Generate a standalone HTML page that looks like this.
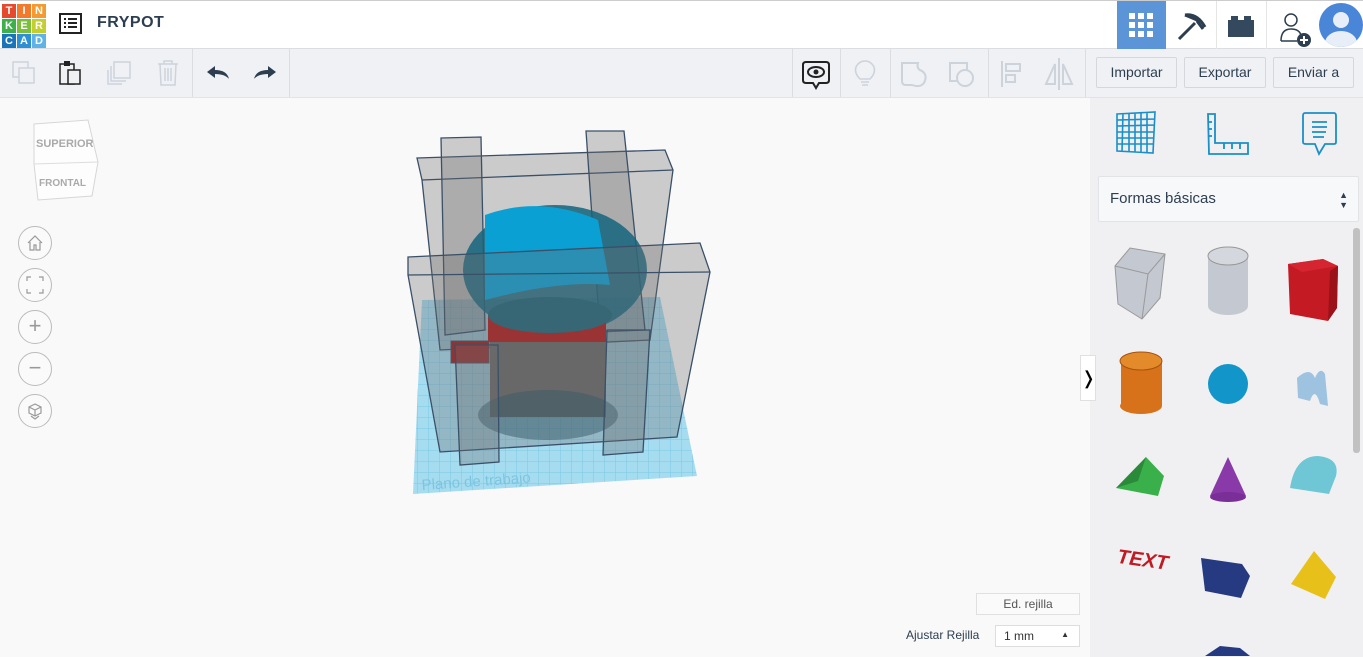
<!DOCTYPE html>
<html><head><meta charset="utf-8">
<style>
*{margin:0;padding:0;box-sizing:border-box}
html,body{width:1363px;height:657px;overflow:hidden}
body{background:#f9f9f9;font-family:"Liberation Sans",sans-serif;position:relative}
.top{position:absolute;left:0;top:0;width:1363px;height:49px;background:#fff;border-top:1px solid #ccc;border-bottom:1px solid #dcdde0}
.tb{position:absolute;left:0;top:49px;width:1363px;height:49px;background:#f0f1f4;border-bottom:1px solid #e2e3e6}
.logo{position:absolute;left:2px;top:3px;display:grid;grid-template-columns:repeat(3,14px);grid-template-rows:repeat(3,14px);gap:1px}
.logo div{color:#fff;font-weight:bold;font-size:11px;text-align:center;line-height:14px}
.btn{position:absolute;top:8px;height:31px;border:1px solid #d5d7dc;border-radius:2px;background:#f0f1f4;font-size:14px;color:#2c3e50;text-align:center;line-height:29px}
.sep{position:absolute;top:0;width:1px;height:48px;background:#dcdde0}
.rp{position:absolute;left:1090px;top:98px;width:273px;height:559px;background:#f0f0f3;overflow:hidden}
.circ{position:absolute;left:18px;width:34px;height:34px;border:1px solid #bbb;border-radius:50%;background:#fafafa;color:#999;text-align:center;font-size:22px;line-height:30px}
</style></head><body>
<div class="top">
<div class="logo">
<div style="background:#e64a2e">T</div><div style="background:#f27a2a">I</div><div style="background:#f39b30">N</div>
<div style="background:#3db04a">K</div><div style="background:#7cbf3a">E</div><div style="background:#c3cf2b">R</div>
<div style="background:#1a74b8">C</div><div style="background:#2e8fd3">A</div><div style="background:#5fb3e6">D</div>
</div>
<svg style="position:absolute;left:59px;top:12px" width="23" height="21" viewBox="0 0 23 21"><rect x="1" y="1" width="21" height="19" fill="none" stroke="#222" stroke-width="2"/><rect x="5" y="5" width="2" height="2" fill="#222"/><rect x="9" y="5" width="9" height="2" fill="#222"/><rect x="5" y="9" width="2" height="2" fill="#222"/><rect x="9" y="9" width="9" height="2" fill="#222"/><rect x="5" y="13" width="2" height="2" fill="#222"/><rect x="9" y="13" width="9" height="2" fill="#222"/></svg>
<div style="position:absolute;left:97px;top:13px;font-size:16px;font-weight:bold;color:#2c3e50;letter-spacing:.5px">FRYPOT</div>
<div style="position:absolute;left:1117px;top:0;width:49px;height:48px;background:#5b95d8"></div>
<svg style="position:absolute;left:1129px;top:12px" width="24" height="24"><g fill="#fff"><rect x="0" y="0" width="6" height="6"/><rect x="9" y="0" width="6" height="6"/><rect x="18" y="0" width="6" height="6"/><rect x="0" y="9" width="6" height="6"/><rect x="9" y="9" width="6" height="6"/><rect x="18" y="9" width="6" height="6"/><rect x="0" y="18" width="6" height="6"/><rect x="9" y="18" width="6" height="6"/><rect x="18" y="18" width="6" height="6"/></g></svg>
<div style="position:absolute;left:1216px;top:0;width:1px;height:48px;background:#e5e5e5"></div>
<div style="position:absolute;left:1266px;top:0;width:1px;height:48px;background:#e5e5e5"></div>
<svg style="position:absolute;left:1175px;top:10px" width="32" height="30"><path d="M4 28 L20 12 M10 4 Q22 2 30 16 M10 4 Q20 8 24 10 M22 10 L28 18" stroke="#2c3e50" stroke-width="3" fill="none"/></svg>
<svg style="position:absolute;left:1228px;top:14px" width="26" height="22"><rect x="0" y="5" width="26" height="17" fill="#34495e"/><rect x="3" y="1" width="7" height="5" fill="#34495e"/><rect x="16" y="1" width="7" height="5" fill="#34495e"/></svg>
<svg style="position:absolute;left:1279px;top:10px" width="34" height="36"><circle cx="12" cy="9" r="6" fill="none" stroke="#2c3e50" stroke-width="1.5"/><path d="M2 30 Q2 18 12 18 Q20 18 22 24 M2 30 H18" fill="none" stroke="#2c3e50" stroke-width="1.5"/><circle cx="25" cy="29" r="7" fill="#2c3e50"/><path d="M25 25 V33 M21 29 H29" stroke="#fff" stroke-width="2"/></svg>
<div style="position:absolute;left:1319px;top:2px;width:44px;height:44px;border-radius:50%;background:#4a86d8;overflow:hidden"><div style="position:absolute;left:14px;top:9px;width:16px;height:16px;border-radius:50%;background:#e8eef8"></div><div style="position:absolute;left:6px;top:28px;width:32px;height:24px;border-radius:50%;background:#e8eef8"></div></div>
</div>
<div class="tb">
<svg style="position:absolute;left:12px;top:12px" width="24" height="24"><rect x="1" y="1" width="15" height="15" fill="none" stroke="#cdd3db" stroke-width="1.5"/><rect x="7" y="7" width="15" height="15" fill="#f0f1f4" stroke="#cdd3db" stroke-width="1.5"/></svg>
<svg style="position:absolute;left:59px;top:10px" width="24" height="28"><rect x="1" y="5" width="14" height="20" fill="none" stroke="#222" stroke-width="1.5"/><rect x="5" y="2" width="6" height="5" fill="#222"/><rect x="9" y="11" width="12" height="14" fill="#f0f1f4" stroke="#222" stroke-width="1.5"/></svg>
<svg style="position:absolute;left:106px;top:11px" width="28" height="28"><rect x="8" y="2" width="16" height="16" fill="none" stroke="#cdd3db" stroke-width="1.5"/><path d="M5 6 V21 H20 M2 10 V24 H16" fill="none" stroke="#cdd3db" stroke-width="1.5"/></svg>
<svg style="position:absolute;left:156px;top:10px" width="24" height="28"><path d="M2 5 H22 M8 5 V2 H16 V5 M4 5 L5 26 H19 L20 5 M9 9 V22 M12 9 V22 M15 9 V22" fill="none" stroke="#cdd3db" stroke-width="1.5"/></svg>
<div class="sep" style="left:192px"></div>
<svg style="position:absolute;left:205px;top:16px" width="26" height="16"><path d="M2 7 L10 1 V5 Q22 5 24 14 Q20 9 10 9 V13 Z" fill="#2c3e50"/></svg>
<svg style="position:absolute;left:252px;top:16px" width="26" height="16"><path d="M24 7 L16 1 V5 Q4 5 2 14 Q6 9 16 9 V13 Z" fill="#2c3e50"/></svg>
<div class="sep" style="left:289px"></div>
<div class="sep" style="left:792px"></div>
<svg style="position:absolute;left:802px;top:11px" width="28" height="30"><path d="M4 2 H24 Q27 2 27 5 V20 Q27 23 24 23 H17 L14 28 L11 23 H4 Q1 23 1 20 V5 Q1 2 4 2Z" fill="none" stroke="#222" stroke-width="2"/><ellipse cx="14" cy="12" rx="8" ry="5" fill="none" stroke="#222" stroke-width="2"/><circle cx="14" cy="12" r="2.5" fill="#222"/></svg>
<div class="sep" style="left:840px"></div>
<svg style="position:absolute;left:852px;top:10px" width="26" height="30"><path d="M8 20 Q2 14 4 8 Q7 2 13 2 Q19 2 22 8 Q24 14 18 20 Z M9 23 H17 M10 26 H16" fill="none" stroke="#cdd3db" stroke-width="1.5"/></svg>
<div class="sep" style="left:890px"></div>
<svg style="position:absolute;left:900px;top:12px" width="30" height="28"><path d="M2 2 H18 Q16 8 22 10 Q28 14 24 22 Q20 27 12 24 L6 24 Q2 24 2 20Z" fill="none" stroke="#cdd3db" stroke-width="2"/></svg>
<svg style="position:absolute;left:948px;top:12px" width="30" height="28"><rect x="2" y="2" width="17" height="18" fill="none" stroke="#cdd3db" stroke-width="2"/><circle cx="17" cy="17" r="8" fill="#f0f1f4" stroke="#cdd3db" stroke-width="2"/></svg>
<div class="sep" style="left:988px"></div>
<svg style="position:absolute;left:1000px;top:11px" width="24" height="28"><path d="M2 1 V27" stroke="#cdd3db" stroke-width="2"/><rect x="6" y="4" width="14" height="7" fill="none" stroke="#cdd3db" stroke-width="2"/><rect x="6" y="15" width="9" height="7" fill="none" stroke="#cdd3db" stroke-width="2"/></svg>
<svg style="position:absolute;left:1043px;top:8px" width="32" height="34"><path d="M16 1 V33" stroke="#cdd3db" stroke-width="2"/><path d="M12 7 L3 27 H12Z M20 7 L29 27 H20Z" fill="none" stroke="#cdd3db" stroke-width="2"/></svg>
<div class="sep" style="left:1085px"></div>
<div class="btn" style="left:1096px;width:81px">Importar</div>
<div class="btn" style="left:1184px;width:82px">Exportar</div>
<div class="btn" style="left:1273px;width:81px">Enviar a</div>
</div>

<svg style="position:absolute;left:28px;top:118px" width="75" height="88" viewBox="0 0 75 88">
<path d="M6 6 L60 2 L70 44 L64 78 L10 82 L6 46Z" fill="#fdfdfd" stroke="#d6d6d6"/>
<path d="M6 46 L70 44" stroke="#ddd"/>
<text x="8" y="29" font-family="Liberation Sans" font-weight="bold" font-size="11" fill="#aaa">SUPERIOR</text>
<text x="11" y="68" font-family="Liberation Sans" font-weight="bold" font-size="10" fill="#aaa">FRONTAL</text>
</svg>
<div class="circ" style="top:226px"><svg width="18" height="18" viewBox="0 0 18 18" style="margin-top:7px"><path d="M2 9 L9 2 L16 9 M4 8 V16 H8 V11 H10 V16 H14 V8" fill="none" stroke="#999" stroke-width="1.2"/></svg></div>
<div class="circ" style="top:268px"><svg width="18" height="18" style="margin-top:7px"><path d="M1 5 V1 H5 M13 1 H17 V5 M17 13 V17 H13 M5 17 H1 V13" fill="none" stroke="#999" stroke-width="1.2"/></svg></div>
<div class="circ" style="top:310px">+</div>
<div class="circ" style="top:352px">−</div>
<div class="circ" style="top:394px"><svg width="18" height="18" style="margin-top:7px"><path d="M9 2 L15 5 V11 L9 14 L3 11 V5Z M3 5 L9 8 L15 5 M9 8 V14 M5 14 L9 17 L13 14" fill="none" stroke="#999" stroke-width="1.2"/></svg></div>

<svg style="position:absolute;left:0;top:98px" width="1090" height="559" viewBox="0 98 1090 559">
<defs>
<pattern id="g" width="11" height="11" patternUnits="userSpaceOnUse"><path d="M11 0 V11 H0" fill="none" stroke="#7cc9e6" stroke-width="1"/></pattern>
</defs>
<polygon points="413,494 697,476 660,297 422,300" fill="#a6dcf0"/>
<polygon points="413,494 697,476 660,297 422,300" fill="url(#g)"/>
<text x="422" y="490" font-family="Liberation Sans" font-size="15" fill="#7cc5e0" transform="rotate(-4 422 490)">Plano de trabajo</text>
<g stroke="#3a5068" stroke-width="1.3" fill="rgba(110,110,110,0.33)">
<polygon points="417,158 665,150 673,170 650,340 440,350 422,180"/>
<line x1="422" y1="180" x2="673" y2="170"/>
<polygon points="441,138 481,137 485,330 445,335"/>
<polygon points="586,131 624,131 645,330 600,332"/>
</g>
<ellipse cx="555" cy="270" rx="92" ry="65" fill="rgba(20,100,125,0.85)"/>
<path d="M485 215 Q540 195 598 220 L610 285 Q560 280 485 300Z" fill="#0aa0d4"/>
<rect x="488" y="315" width="118" height="27" fill="#b01818"/>
<ellipse cx="550" cy="315" rx="62" ry="18" fill="#1d6378"/>
<rect x="490" y="342" width="116" height="75" fill="#666"/>
<ellipse cx="548" cy="415" rx="70" ry="25" fill="rgba(30,80,100,0.5)"/>
<rect x="451" y="341" width="38" height="22" fill="#a01818" stroke="#3a5068"/>
<g stroke="#3a5068" stroke-width="1.3" fill="rgba(110,110,110,0.33)">
<polygon points="408,257 700,243 710,272 677,437 440,452 408,275"/>
<line x1="408" y1="275" x2="710" y2="272" fill="none"/>
<polygon points="455,345 498,345 499,462 460,465"/>
<polygon points="607,330 650,330 643,452 603,455"/>
</g>
</svg>

<div style="position:absolute;left:976px;top:593px;width:104px;height:22px;border:1px solid #e0e0e0;background:#fafafa;font-size:12px;color:#555;text-align:center;line-height:20px">Ed. rejilla</div>
<div style="position:absolute;left:906px;top:628px;font-size:12px;color:#2c3e50">Ajustar Rejilla</div>
<div style="position:absolute;left:995px;top:625px;width:85px;height:22px;border:1px solid #ddd;background:#fff;font-size:12px;color:#333;line-height:20px;padding-left:8px">1 mm<span style="position:absolute;right:10px;top:-1px;font-size:8px">▲</span></div>

<div class="rp">
<svg style="position:absolute;left:25px;top:13px" width="42" height="44"><path d="M2 3 L40 1 L38 42 L2 40Z M8 2 L7 41 M14 2 L14 41 M20 2 L20 41 M26 2 L26 41 M32 2 L32 41 M2 9 L40 8 M2 15 L39 14 M2 21 L39 21 M2 27 L39 27 M2 33 L38 33" fill="none" stroke="#1a8fc9" stroke-width="1.6"/></svg>
<svg style="position:absolute;left:116px;top:15px" width="44" height="42"><path d="M2 1 H9 V30 H42 V41 H3Z M2 9 H6 M2 16 H6 M2 23 H6 M18 30 V36 M26 30 V36 M34 30 V36" fill="none" stroke="#1a8fc9" stroke-width="1.8"/></svg>
<svg style="position:absolute;left:212px;top:14px" width="36" height="44"><path d="M3 1 H32 Q34 1 34 4 V30 Q34 32 32 32 H23 L17 42 L13 32 H4 Q1 32 1 30 V4 Q1 1 3 1Z M10 10 H25 M10 15 H25 M10 20 H24 M11 25 H22" fill="none" stroke="#1a8fc9" stroke-width="1.8"/></svg>
<div style="position:absolute;left:8px;top:78px;width:261px;height:46px;background:#f7f8fa;border:1px solid #e2e3e6;border-radius:2px;font-size:15px;color:#2c3e50;line-height:44px;padding-left:11px">Formas básicas<span style="position:absolute;right:10px;top:0;font-size:9px;line-height:10px;padding-top:13px">▲<br>▼</span></div>
<div style="position:absolute;left:263px;top:130px;width:7px;height:225px;background:#c1c1c1;border-radius:3px"></div>
<svg style="position:absolute;left:0;top:18px" width="262" height="540">
<polygon points="25,150 40,132 75,138 70,182 52,203 28,188" fill="#c4c8d0" stroke="#999"/>
<path d="M25,150 L58,158 L75,138 M58,158 L52,203" stroke="#999" fill="none"/>
<rect x="118" y="140" width="40" height="50" fill="#c4c8d0"/><ellipse cx="138" cy="190" rx="20" ry="9" fill="#c4c8d0"/><ellipse cx="138" cy="140" rx="20" ry="9" fill="#d4d7dd" stroke="#999"/>
<polygon points="198,148 233,143 248,150 247,192 238,205 200,198" fill="#c41a24"/><polygon points="198,148 233,143 248,150 212,156" fill="#d42530"/><polygon points="238,205 247,192 248,150 240,155" fill="#9b121a"/>
<rect x="31" y="245" width="41" height="45" fill="#d8721a"/><ellipse cx="51" cy="290" rx="21" ry="8" fill="#d8721a"/><ellipse cx="51" cy="245" rx="21" ry="9" fill="#e38a2a" stroke="#a5520f"/>
<circle cx="138" cy="268" r="20" fill="#1295c9"/>
<path d="M207,262 Q220,250 225,262 Q230,250 235,258 L238,290 L230,288 Q225,270 220,285 L208,282Z" fill="#9ec3e0"/>
<polygon points="26,372 56,341 74,360 68,380" fill="#3ab04b"/><polygon points="26,372 56,341 48,365" fill="#2a8a3a"/>
<polygon points="138,341 120,380 156,380" fill="#8a3aa8"/><ellipse cx="138" cy="381" rx="18" ry="5" fill="#7a2e98"/>
<path d="M200,372 Q205,340 228,340 Q250,342 246,360 L239,378Z" fill="#6fc7d6"/>
<text x="27" y="450" font-family="Liberation Sans" font-weight="bold" font-style="italic" font-size="20" fill="#c01a22" transform="rotate(8 50 445)">TEXT</text>
<polygon points="111,442 152,448 160,460 151,482 115,475" fill="#253a80"/>
<polygon points="224,435 201,468 235,483 246,461" fill="#e8c01a"/>
<polygon points="115,540 130,530 150,532 160,540" fill="#253a80"/>
</svg>
</div>
<div style="position:absolute;left:1080px;top:355px;width:16px;height:46px;background:#fff;border:1px solid #e0e0e0;font-size:18px;line-height:44px;text-align:center">❭</div>
</body></html>
